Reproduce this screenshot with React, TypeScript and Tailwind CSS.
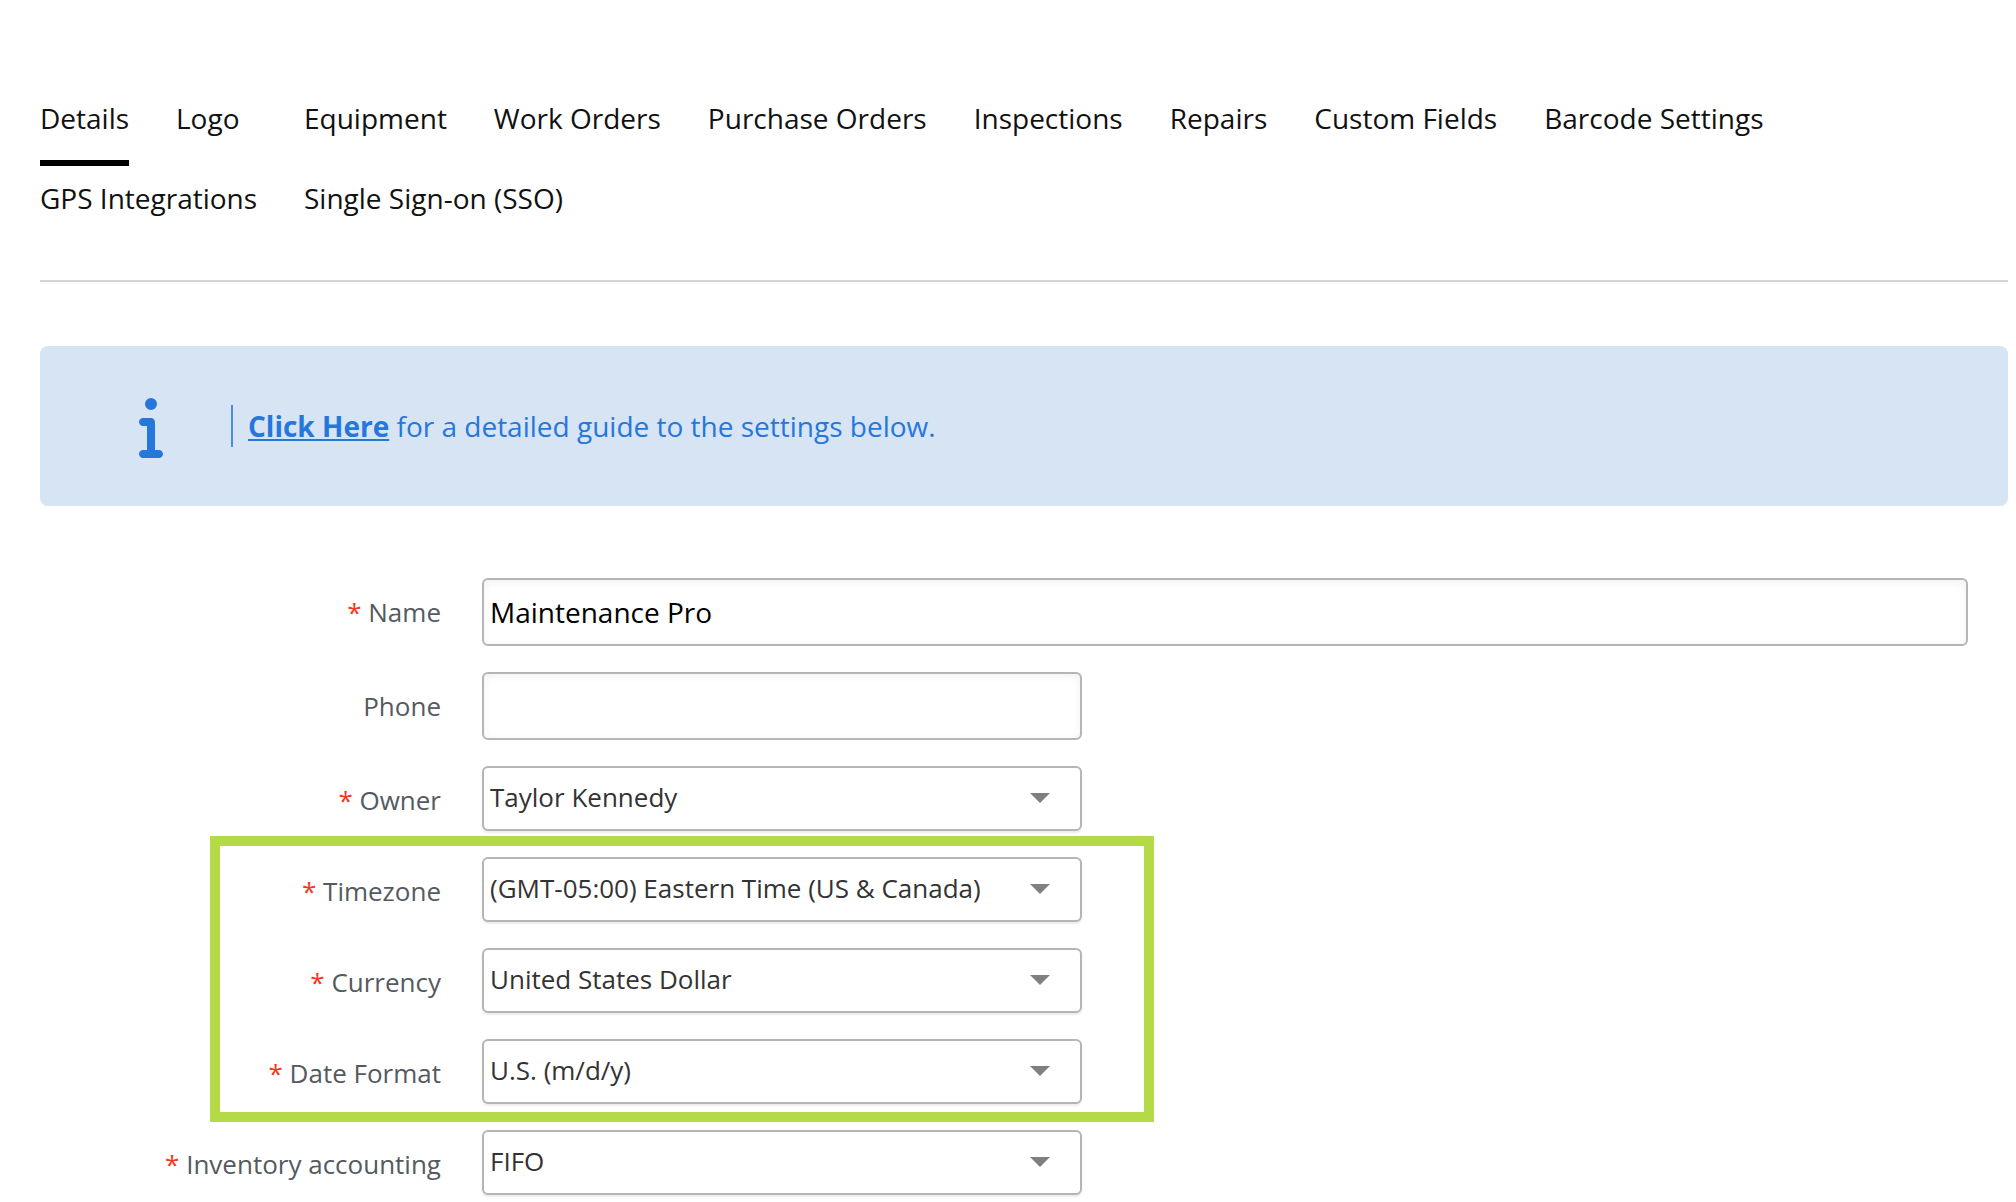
import React from 'react';
import { FaInfo } from 'react-icons/fa6';

const tabs = [
  { label: "Details", active: true },
  { label: "Logo" },
  { label: "Equipment" },
  { label: "Work Orders" },
  { label: "Purchase Orders" },
  { label: "Inspections" },
  { label: "Repairs" },
  { label: "Custom Fields" },
  { label: "Barcode Settings" },
  { label: "GPS Integrations", wide: true },
  { label: "Single Sign-on (SSO)", wide: true }
];

const Row: React.FC<{ id: string; label: string; required?: boolean; children: React.ReactNode }> = ({ id, label, required, children }) => (
  <div className="grid grid-cols-[401px_1fr] gap-x-[41px] items-start">
    <label htmlFor={id} className="pt-4 text-right text-[26px] leading-9 text-[#545a5f]">
      {required && <span className="text-[#f5361c]">* </span>}
      {label}
    </label>
    {children}
  </div>
);

const TextField: React.FC<{ id: string; value: string; className?: string }> = ({ id, value, className = "" }) => (
  <input
    id={id}
    type="text"
    defaultValue={value}
    className={`h-[68px] px-1.5 border-2 border-[#b5b5b5] rounded-md bg-white text-[28px] text-black shadow-[inset_0_2px_8px_rgba(0,0,0,0.06)] outline-none ${className}`}
  />
);

const SelectField: React.FC<{ id: string; value: string }> = ({ id, value }) => (
  <div className="relative w-full max-w-[600px]">
    <select
      id={id}
      defaultValue={value}
      className="appearance-none block w-full h-[65px] pl-1.5 pr-16 pb-0.5 border-2 border-[#b5b5b5] rounded-md bg-white text-[26px] text-[#333333] shadow-[0_2px_2px_rgba(0,0,0,0.08)] outline-none"
    >
      <option>{value}</option>
    </select>
    <svg viewBox="0 0 20 10" className="absolute right-8 top-[27px] w-5 h-2.5 fill-[#808080] pointer-events-none" aria-hidden="true">
      <path d="M0 0h20L10 10z" />
    </svg>
  </div>
);

const App: React.FC = () => {
  return (
    <main className="bg-white pl-10 pr-2 pt-[98px] pb-1.5 font-['Open_Sans',sans-serif]">
      <nav className="grid grid-cols-[89px_81px_repeat(7,max-content)] gap-x-[47px] auto-rows-[80px] items-start text-[28px] leading-10 text-[#111111]">
        {tabs.map((t) => (
          <button
            key={t.label}
            type="button"
            className={`justify-self-start whitespace-nowrap pb-[22px] ${t.active ? "border-b-[6px] border-black" : ""} ${t.wide ? "col-span-2" : ""}`}
          >
            {t.label}
          </button>
        ))}
      </nav>

      <hr className="mt-[22px] border-t-2 border-[#d4d4d4]" />

      <section className="mt-16 flex items-center h-40 rounded-lg bg-[#d7e4f4] text-[#2577dc]">
        <div className="w-[191px] pl-[99px]">
          <FaInfo className="w-6 h-16" />
        </div>
        <p className="border-l-2 border-[#4a90e2] pl-[15px] text-[28px] leading-[42px]">
          <a href="#guide" className="font-bold underline decoration-2 underline-offset-2">Click Here</a> for a detailed guide to the settings below.
        </p>
      </section>

      <form className="mt-[72px] pr-10 flex flex-col gap-[26px]">
        <Row id="name" label="Name" required>
          <TextField id="name" value="Maintenance Pro" className="w-full" />
        </Row>
        <Row id="phone" label="Phone">
          <TextField id="phone" value="" className="w-full max-w-[600px]" />
        </Row>
        <Row id="owner" label="Owner" required>
          <SelectField id="owner" value="Taylor Kennedy" />
        </Row>

        <div className="relative flex flex-col gap-[26px]">
          {/* highlight around the regional settings */}
          <div className="absolute left-[170px] -top-[21px] -bottom-[18px] w-[944px] border-10 border-[#b5da47] pointer-events-none" />
          <Row id="timezone" label="Timezone" required>
            <SelectField id="timezone" value="(GMT-05:00) Eastern Time (US & Canada)" />
          </Row>
          <Row id="currency" label="Currency" required>
            <SelectField id="currency" value="United States Dollar" />
          </Row>
          <Row id="date-format" label="Date Format" required>
            <SelectField id="date-format" value="U.S. (m/d/y)" />
          </Row>
        </div>

        <Row id="inventory" label="Inventory accounting" required>
          <SelectField id="inventory" value="FIFO" />
        </Row>
      </form>
    </main>
  );
};

export default App;
